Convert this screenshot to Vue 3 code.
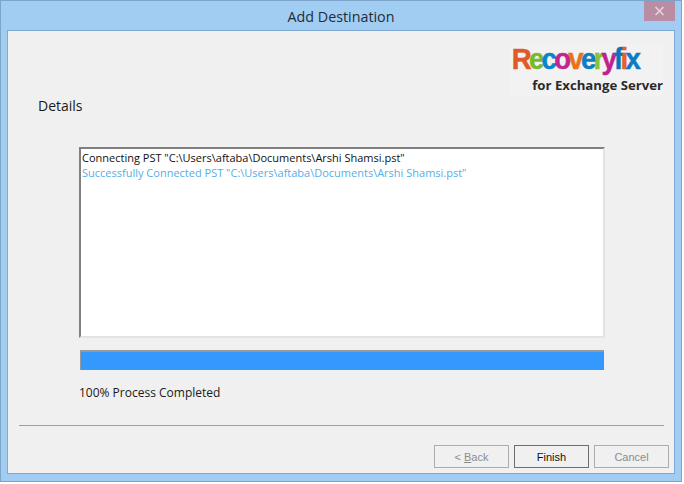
<script setup>
const logo = [
  ['R', '#e0592a'], ['e', '#7ab929'], ['c', '#0a85c9'], ['o', '#c2258f'],
  ['v', '#e8731a'], ['e', '#0f7cc4'], ['r', '#8cc036'], ['y', '#c0218f'],
  ['f', '#0a74bd'], ['i', '#e8602a'], ['x', '#0a7cc4']
]
const logLines = [
  { text: 'Connecting PST "C:\\Users\\aftaba\\Documents\\Arshi Shamsi.pst"', ok: false },
  { text: 'Successfully Connected PST "C:\\Users\\aftaba\\Documents\\Arshi Shamsi.pst"', ok: true }
]
</script>

<template>
  <div class="window">
    <div class="titlebar">
      <span class="title">Add Destination</span>
      <div class="close">
        <svg width="11" height="10" viewBox="0 0 11 10">
          <path d="M1.5 1 L9.5 9 M9.5 1 L1.5 9" stroke="#e8d3dc" stroke-width="1.6" fill="none" />
        </svg>
      </div>
    </div>
    <div class="panel">
      <div class="brand-row">
        <div class="brand">
          <div class="wordmark">
            <span v-for="(l, i) in logo" :key="i" :style="{ color: l[1] }">{{ l[0] }}</span>
          </div>
          <div class="tagline">for Exchange Server</div>
        </div>
      </div>
      <div class="heading">Details</div>
      <div class="content">
        <div class="log">
          <div v-for="line in logLines" :key="line.text" class="line" :class="{ ok: line.ok }">{{ line.text }}</div>
        </div>
        <div class="progress"></div>
        <div class="status">100% Process Completed</div>
      </div>
      <div class="divider"></div>
      <div class="buttons">
        <button class="btn" disabled>&lt; <u>B</u>ack</button>
        <button class="btn primary">Finish</button>
        <button class="btn" disabled>Cancel</button>
      </div>
    </div>
  </div>
</template>

<style scoped>
.window {
  width: 682px;
  height: 482px;
  box-sizing: border-box;
  background: #a2cdf2;
  border: 1px solid #7da4c9;
  display: flex;
  flex-direction: column;
  padding: 0 6px 7px 6px;
  position: relative;
  font-family: "Open Sans", sans-serif;
}
.titlebar {
  height: 29px;
  flex: none;
  display: flex;
  align-items: center;
  justify-content: center;
}
.title {
  font-family: "Open Sans", sans-serif;
  font-size: 14.3px;
  color: #1f2c38;
  margin-top: 1px;
}
.close {
  position: absolute;
  top: 0;
  right: 6px;
  width: 31px;
  height: 20px;
  background: #b98da3;
  display: flex;
  align-items: center;
  justify-content: center;
}
.panel {
  flex: 1;
  background: #f0f0f0;
  border: 1px solid #7fa9d3;
  display: flex;
  flex-direction: column;
  min-height: 0;
}
.brand-row {
  display: flex;
  justify-content: flex-end;
  padding: 13px 11px 0 0;
}
.brand {
  width: 153px;
  height: 52px;
  background: #f2f2f2;
}
.wordmark {
  font-family: "Liberation Sans", sans-serif;
  font-weight: bold;
  font-size: 30px;
  line-height: 30px;
  letter-spacing: -3px;
  -webkit-text-stroke: 0.5px currentColor;
  padding-left: 2px;
  white-space: nowrap;
  transform: scaleX(0.92);
  transform-origin: left center;
}
.wordmark span {
  -webkit-text-stroke-color: currentColor;
}
.tagline {
  font-family: "Open Sans", sans-serif;
  font-weight: 700;
  font-size: 13.2px;
  line-height: 16px;
  color: #2a2a2a;
  text-align: right;
  white-space: nowrap;
  margin-top: 3px;
}
.heading {
  font-size: 14px;
  line-height: 20px;
  color: #1a1a1a;
  margin: 0 0 0 30px;
}
.content {
  margin: 31px 69px 0 71px;
  flex: 1;
}
.log {
  height: 191px;
  box-sizing: border-box;
  background: #fff;
  border: 2px solid;
  border-color: #808080 #e3e3e3 #e3e3e3 #808080;
  padding: 1px 1px;
}
.line {
  font-size: 11px;
  line-height: 15px;
  color: #111;
  white-space: nowrap;
}
.line.ok {
  color: #56aee6;
}
.progress {
  height: 20px;
  box-sizing: border-box;
  margin: 12px 0 0 1px;
  width: 524px;
  background: #3399ff;
  border-top: 2px solid #999;
  border-left: 1px solid #999;
}
.status {
  font-size: 12px;
  line-height: 16px;
  color: #1a1a1a;
  margin-top: 15px;
}
.divider {
  height: 1px;
  background: #a0a0a0;
  margin: 0 10px 0 11px;
}
.buttons {
  display: flex;
  justify-content: flex-end;
  gap: 5px;
  padding: 19px 5px 5px 0;
}
.btn {
  width: 75px;
  height: 23px;
  box-sizing: border-box;
  background: #f0f0f0;
  border: 1px solid #adadad;
  outline: none;
  padding: 0;
  font-family: "Liberation Sans", sans-serif;
  font-size: 11px;
  color: #8c8c8c;
}
.btn.primary {
  border-color: #6e6e6e;
  color: #111;
}
</style>

<style>
html, body {
  background: #fff;
}
</style>
